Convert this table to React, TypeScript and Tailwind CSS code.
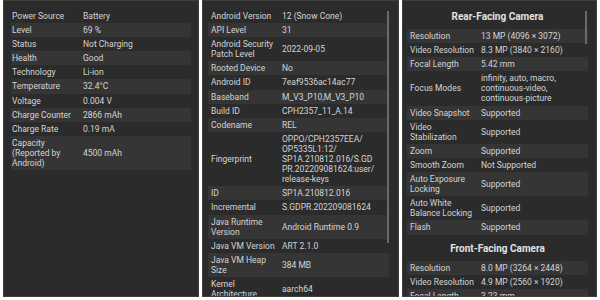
type Pair = [string, React.ReactNode];

const battery: Pair[] = [
  ["Power Source", "Battery"],
  ["Level", "69 %"],
  ["Status", "Not Charging"],
  ["Health", "Good"],
  ["Technology", "Li-ion"],
  ["Temperature", "32.4°C"],
  ["Voltage", "0.004 V"],
  ["Charge Counter", "2866 mAh"],
  ["Charge Rate", "0.19 mA"],
  ["Capacity (Reported by Android)", "4500 mAh"],
];

const system: Pair[] = [
  ["Android Version", "12 (Snow Cone)"],
  ["API Level", "31"],
  ["Android Security Patch Level", "2022-09-05"],
  ["Rooted Device", "No"],
  ["Android ID", "7eaf9536ac14ac77"],
  ["Baseband", "M_V3_P10,M_V3_P10"],
  ["Build ID", "CPH2357_11_A.14"],
  ["Codename", "REL"],
  [
    "Fingerprint",
    <span className="whitespace-nowrap">
      OPPO/CPH2357EEA/
      <br />
      OP5335L1:12/
      <br />
      SP1A.210812.016/S.GD
      <br />
      PR.202209081624:user/
      <br />
      release-keys
    </span>,
  ],
  ["ID", "SP1A.210812.016"],
  ["Incremental", "S.GDPR.202209081624"],
  ["Java Runtime Version", "Android Runtime 0.9"],
  ["Java VM Version", "ART 2.1.0"],
  ["Java VM Heap Size", "384 MB"],
  ["Kernel Architecture", "aarch64"],
];

const rearCamera: Pair[] = [
  ["Resolution", "13 MP (4096 × 3072)"],
  ["Video Resolution", "8.3 MP (3840 × 2160)"],
  ["Focal Length", "5.42 mm"],
  ["Focus Modes", "infinity, auto, macro, continuous-video, continuous-picture"],
  ["Video Snapshot", "Supported"],
  ["Video Stabilization", "Supported"],
  ["Zoom", "Supported"],
  ["Smooth Zoom", "Not Supported"],
  ["Auto Exposure Locking", "Supported"],
  ["Auto White Balance Locking", "Supported"],
  ["Flash", "Supported"],
];

const frontCamera: Pair[] = [
  ["Resolution", "8.0 MP (3264 × 2448)"],
  ["Video Resolution", "4.9 MP (2560 × 1920)"],
  ["Focal Length", "3.23 mm"],
];

const InfoTable = ({
  rows,
  stripeFirst = false,
  labelClass,
}: {
  rows: Pair[];
  stripeFirst?: boolean;
  labelClass: string;
}) => (
  <div className="flex flex-col">
    {rows.map(([label, value], i) => {
      const striped = stripeFirst ? i % 2 === 0 : i % 2 === 1;
      return (
        <div
          key={label}
          className={`flex items-center py-[2px] leading-[10.1px] ${striped ? "bg-[#353535]" : ""}`}
        >
          <div className={`shrink-0 pr-[4px] ${labelClass}`}>{label}</div>
          <div className="flex-1 min-w-0 pr-[2px]">{value}</div>
        </div>
      );
    })}
  </div>
);

const Panel = ({ className, children }: { className: string; children: React.ReactNode }) => (
  <div
    className={`relative h-[297px] overflow-hidden bg-[#2b2b2b] border border-[#3d3d3d] text-[8.5px] text-[#d4d4d4] ${className}`}
  >
    {children}
  </div>
);

const Heading = ({ children }: { children: React.ReactNode }) => (
  <div className="pt-[8px] pb-[6px] text-center text-[10px] leading-[12px] font-bold text-[#e2e2e2]">
    {children}
  </div>
);

export default function App() {
  return (
    <div
      className="w-[600px] h-[300px] bg-white flex gap-[3px] px-[3px]"
      style={{ fontFamily: "Roboto, 'Noto Sans', sans-serif" }}
    >
      <Panel className="w-[196px] pt-[8px] px-[7px]">
        <InfoTable rows={battery} labelClass="w-[72px] pl-[1px]" />
      </Panel>

      <Panel className="w-[197px] pt-[8px] pl-[5px] pr-[9px]">
        <InfoTable rows={system} labelClass="w-[74px] pl-[3px]" />
        <div className="absolute left-[184px] top-[10px] w-[2px] h-[232px] bg-[#6a6a6a]" />
      </Panel>

      <Panel className="w-[195px] pt-[2px] pl-[4px] pr-[8px]">
        <Heading>Rear-Facing Camera</Heading>
        <InfoTable rows={rearCamera} stripeFirst labelClass="w-[74px] pl-[3px]" />
        <Heading>Front-Facing Camera</Heading>
        <InfoTable rows={frontCamera} stripeFirst labelClass="w-[74px] pl-[3px]" />
        <div className="absolute left-[182px] top-[10px] w-[2px] h-[33px] bg-[#6a6a6a]" />
      </Panel>
    </div>
  );
}
